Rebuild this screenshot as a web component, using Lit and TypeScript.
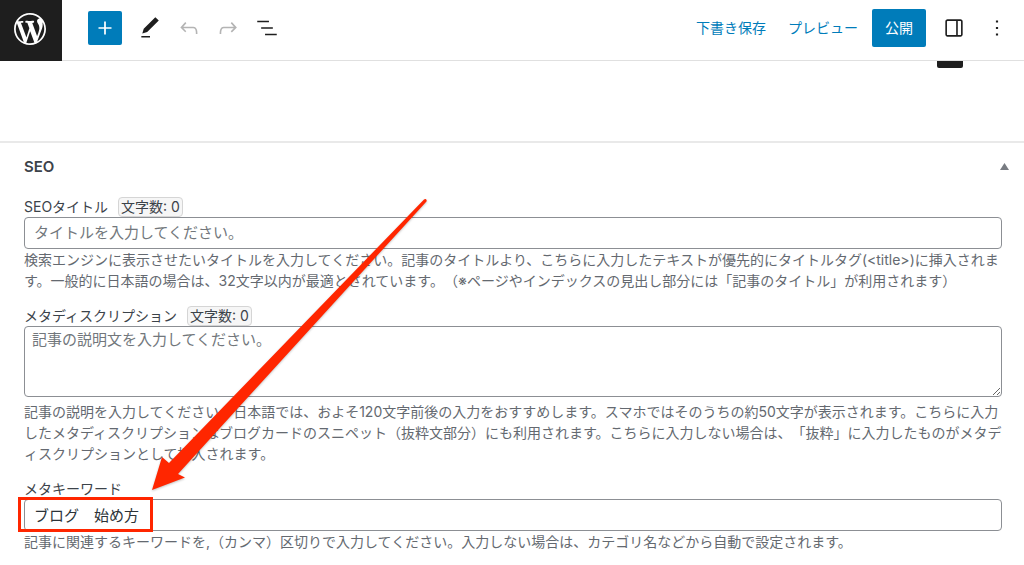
import { LitElement, html, css, svg } from "lit";
import { customElement, property, state } from "lit/decorators.js";

const ICONS: Record<string, string> = {
  plus: "M18 11.2h-5.2V6h-1.6v5.2H6v1.6h5.2V18h1.6v-5.2H18z",
  edit: "M20.1 5.1L16.9 2 6.2 12.7l-1.3 4.4 4.5-1.3L20.1 5.1zM4 20.8h8v-1.5H4v1.5z",
  undo: "M18.3 11.7c-.6-.6-1.4-.9-2.3-.9H6.7l2.9-3.3-1.1-1-4.5 5L8.5 16l1-1-2.7-2.7H16c.5 0 .9.2 1.3.5 1 1 1 3.4 1 4.5v.3h1.5v-.2c0-1.5 0-4.3-1.5-5.7z",
  redo: "M15.6 6.5l-1.1 1 2.9 3.3H8c-.9 0-1.7.3-2.3.9-1.4 1.5-1.4 4.2-1.4 5.6v.2h1.5v-.3c0-1.1 0-3.5 1-4.5.3-.3.7-.5 1.3-.5h9.2L14.5 15l1.1 1.1 4.6-4.6-4.6-5z",
  list: "M13.8 5.2H3v1.5h10.8V5.2zm-3.6 12v1.5H21v-1.5H10.2zm7.2-6H6.6v1.5h10.8v-1.5z",
  sidebar:
    "M18 4H6c-1.1 0-2 .9-2 2v12c0 1.1.9 2 2 2h12c1.1 0 2-.9 2-2V6c0-1.1-.9-2-2-2zm-4 14.5H6c-.3 0-.5-.2-.5-.5V6c0-.3.2-.5.5-.5h8v13zm4.5-.5c0 .3-.2.5-.5.5h-2.5v-13H18c.3 0 .5.2.5.5v12z",
  more: "M13 19h-2v-2h2v2zm0-6h-2v-2h2v2zm0-6h-2V5h2v2z",
};

const WORDPRESS =
  "M20 10c0-5.51-4.49-10-10-10C4.48 0 0 4.49 0 10c0 5.52 4.48 10 10 10 5.51 0 10-4.48 10-10zM7.78 15.37L4.37 6.22c.55-.02 1.17-.08 1.17-.08.5-.06.44-1.13-.06-1.11 0 0-1.45.11-2.37.11-.18 0-.37 0-.58-.01C4.12 2.69 6.87 1.11 10 1.11c2.33 0 4.45.87 6.05 2.34-.68-.11-1.65.39-1.65 1.58 0 .74.45 1.36.9 2.1.35.61.55 1.36.55 2.46 0 1.49-1.4 5-1.4 5l-3.03-8.37c.54-.02.82-.17.82-.17.5-.05.44-1.25-.06-1.22 0 0-1.44.12-2.38.12-.87 0-2.33-.12-2.33-.12-.5-.03-.56 1.2-.06 1.22l.92.08 1.26 3.41zM17.41 10c.24-.64.74-1.87.43-4.25.7 1.29 1.05 2.71 1.05 4.25 0 3.29-1.73 6.24-4.4 7.78.97-2.59 1.94-5.2 2.92-7.78zM6.1 18.09C3.12 16.65 1.11 13.53 1.11 10c0-1.3.23-2.48.72-3.59C3.25 10.3 4.67 14.2 6.1 18.09zm4.03-6.63l2.58 6.98c-.86.29-1.76.45-2.71.45-.79 0-1.57-.11-2.29-.33.81-2.38 1.62-4.74 2.42-7.1z";

const icon = (name: string) =>
  html`<svg class="icon" viewBox="0 0 24 24" aria-hidden="true">${svg`<path d=${ICONS[name]} />`}</svg>`;

const base = css`
  * {
    box-sizing: border-box;
  }
  button,
  input,
  textarea {
    font-family: inherit;
    margin: 0;
  }
  button {
    border: 0;
    padding: 0;
    background: none;
    cursor: pointer;
  }
`;

@customElement("editor-header")
class EditorHeader extends LitElement {
  static styles = [
    base,
    css`
      :host {
        display: flex;
        align-items: center;
        height: 61px;
        background: #fff;
        border-bottom: 1px solid #e0e0e0;
      }
      .logo {
        display: flex;
        align-items: center;
        justify-content: center;
        width: 62px;
        height: 61px;
        margin-bottom: -1px;
        padding: 0 2px 4px 0;
        background: #1e1e1e;
      }
      .logo svg {
        width: 32px;
        height: 32px;
        fill: #fff;
      }
      .icon {
        display: block;
        width: 26px;
        height: 26px;
        fill: currentColor;
      }
      .tools,
      .settings {
        display: flex;
        align-items: center;
        padding-bottom: 4px;
      }
      .tools {
        gap: 5px;
        margin-left: 26px;
      }
      .tool {
        display: flex;
        align-items: center;
        justify-content: center;
        width: 34px;
        height: 34px;
        border-radius: 2px;
        color: #1e1e1e;
      }
      .tool:disabled {
        color: #b4b4b4;
      }
      .add {
        margin-right: 6px;
        background: #007cba;
        color: #fff;
      }
      .settings {
        margin-left: auto;
        padding-right: 10px;
      }
      .link {
        height: 38px;
        margin-right: 22px;
        padding-bottom: 2px;
        font-size: 14px;
        color: #007cba;
      }
      .link + .link {
        margin-right: 14px;
      }
      .publish {
        width: 54px;
        height: 38px;
        margin-right: 11px;
        padding-bottom: 2px;
        border-radius: 2px;
        background: #007cba;
        color: #fff;
        font-size: 14px;
      }
      .settings .tool + .tool {
        margin-left: 9px;
      }
    `,
  ];

  render() {
    return html`
      <a class="logo" href="#" aria-label="投稿一覧を表示">
        <svg viewBox="0 0 20 20" aria-hidden="true"><path d=${WORDPRESS} /></svg>
      </a>
      <div class="tools">
        <button class="tool add" aria-label="ブロック挿入ツール">${icon("plus")}</button>
        <button class="tool" aria-label="ツール">${icon("edit")}</button>
        <button class="tool" aria-label="元に戻す" disabled>${icon("undo")}</button>
        <button class="tool" aria-label="やり直す" disabled>${icon("redo")}</button>
        <button class="tool" aria-label="リスト表示">${icon("list")}</button>
      </div>
      <div class="settings">
        <button class="link">下書き保存</button>
        <button class="link">プレビュー</button>
        <button class="publish">公開</button>
        <button class="tool" aria-label="設定">${icon("sidebar")}</button>
        <button class="tool" aria-label="オプション">${icon("more")}</button>
      </div>
    `;
  }
}

@customElement("seo-field")
class SeoField extends LitElement {
  @property() label = "";
  @property() placeholder = "";
  @property() value = "";
  @property() help = "";
  @property({ type: Boolean }) multiline = false;
  @property({ type: Boolean }) counted = false;

  static styles = [
    base,
    css`
      :host {
        display: block;
      }
      .head {
        display: flex;
        align-items: center;
        gap: 10px;
        height: 20px;
        font-size: 14px;
        line-height: 20px;
        color: #3c434a;
      }
      .count {
        height: 20px;
        padding: 0 2px;
        border: 1px solid #d5d5d5;
        border-radius: 4px;
        background: #f6f6f6;
        line-height: 18px;
      }
      .control {
        display: block;
        width: 100%;
        border: 1px solid #8c8f94;
        border-radius: 4px;
        background: #fff;
        font-size: 15px;
        color: #2c3338;
        outline: 0;
      }
      .control::placeholder {
        color: #72777c;
        opacity: 1;
      }
      input.control {
        height: 32px;
        padding: 0 9px 2px;
      }
      textarea.control {
        height: 71px;
        margin-bottom: 4px;
        padding: 2px 7px;
        line-height: 22px;
        resize: vertical;
      }
      .help {
        margin: 0;
        font-size: 14px;
        line-height: 21px;
        text-spacing-trim: space-all;
        color: #646970;
      }
    `,
  ];

  private onInput(e: Event) {
    this.value = (e.target as HTMLInputElement).value;
  }

  render() {
    return html`
      <div class="head">
        <label for="control">${this.label}</label>
        ${this.counted ? html`<output class="count" for="control">文字数: ${this.value.length}</output>` : ""}
      </div>
      ${this.multiline
        ? html`<textarea id="control" class="control" aria-describedby="help" placeholder=${this.placeholder} .value=${this.value} @input=${this.onInput}></textarea>`
        : html`<input id="control" class="control" type="text" aria-describedby="help" placeholder=${this.placeholder} .value=${this.value} @input=${this.onInput} />`}
      <p id="help" class="help">${this.help}</p>
    `;
  }
}

@customElement("app-root")
class AppRoot extends LitElement {
  @state() private open = true;

  static styles = [
    base,
    css`
      :host {
        display: block;
        position: relative;
        min-height: 100vh;
        overflow: hidden;
        background: #fff;
        font-family: Inter, "Noto Sans CJK JP", sans-serif;
      }
      .canvas {
        display: flex;
        justify-content: flex-end;
        height: 80px;
        padding-right: 61px;
      }
      .appender {
        width: 26px;
        height: 7px;
        border-radius: 0 0 2px 2px;
        background: #1e1e1e;
      }
      .panel {
        border-top: 2px solid #e9e9e9;
      }
      .panel-head {
        display: flex;
        align-items: center;
        justify-content: space-between;
        height: 46px;
        padding: 0 15px 0 24px;
      }
      h2 {
        margin: 0;
        font-size: 15px;
        font-weight: 600;
        color: #3c434a;
      }
      .toggle svg {
        display: block;
        width: 9px;
        height: 7px;
        fill: #787c82;
      }
      .fields {
        display: flex;
        flex-direction: column;
        gap: 15px;
        padding: 8px 22px 12px 24px;
      }
      .fields[hidden] {
        display: none;
      }
      .mark {
        position: absolute;
        top: 497px;
        left: 18px;
        width: 135px;
        height: 35px;
        border: 3px solid #ff2600;
        pointer-events: none;
      }
      .arrow {
        position: absolute;
        top: 196px;
        left: 148px;
        width: 282px;
        height: 298px;
        fill: #ff2600;
        pointer-events: none;
        filter: drop-shadow(0 1px 1px rgb(0 0 0 / 0.25));
      }
    `,
  ];

  render() {
    return html`
      <editor-header></editor-header>
      <div class="canvas"><div class="appender"></div></div>
      <section class="panel">
        <div class="panel-head">
          <h2>SEO</h2>
          <button class="toggle" aria-label="パネルを切り替え" aria-expanded=${this.open} @click=${() => (this.open = !this.open)}>
            <svg viewBox="0 0 9 7" aria-hidden="true"><path d="M4.5 0L9 7H0z" /></svg>
          </button>
        </div>
        <div class="fields" ?hidden=${!this.open}>
          <seo-field
            counted
            label="SEOタイトル"
            placeholder="タイトルを入力してください。"
            help="検索エンジンに表示させたいタイトルを入力してください。記事のタイトルより、こちらに入力したテキストが優先的にタイトルタグ(<title>)に挿入されます。一般的に日本語の場合は、32文字以内が最適とされています。（※ページやインデックスの見出し部分には「記事のタイトル」が利用されます）"
          ></seo-field>
          <seo-field
            counted
            multiline
            label="メタディスクリプション"
            placeholder="記事の説明文を入力してください。"
            help="記事の説明を入力してください。日本語では、およそ120文字前後の入力をおすすめします。スマホではそのうちの約50文字が表示されます。こちらに入力したメタディスクリプションはブログカードのスニペット（抜粋文部分）にも利用されます。こちらに入力しない場合は、「抜粋」に入力したものがメタディスクリプションとして挿入されます。"
          ></seo-field>
          <seo-field
            label="メタキーワード"
            value="ブログ　始め方"
            help="記事に関連するキーワードを,（カンマ）区切りで入力してください。入力しない場合は、カテゴリ名などから自動で設定されます。"
          ></seo-field>
        </div>
      </section>
      <div class="mark"></div>
      <svg class="arrow" viewBox="148 196 282 298" aria-hidden="true">
        <path d="M152 490L162 457L169 463L424 199.500Q426 198.500 426.500 200Q427 201 426 202L178 474L185 477.500Z" />
      </svg>
    `;
  }
}
